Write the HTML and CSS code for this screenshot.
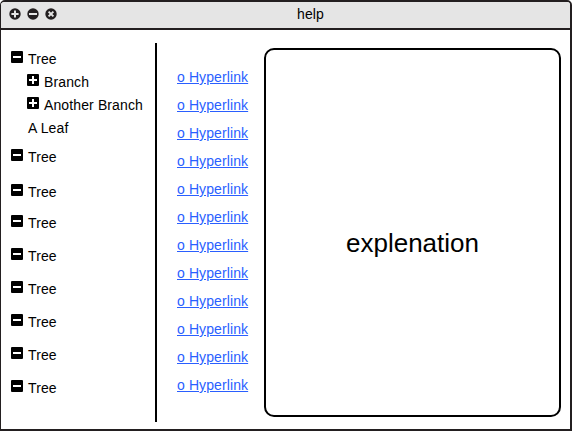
FILE: index.html
```
<!DOCTYPE html>
<html lang="en">
<head>
<meta charset="utf-8">
<title>help</title>
<link rel="stylesheet" href="styles.css">
</head>
<body>
<svg class="defs" width="0" height="0">
  <symbol id="minus" viewBox="0 0 12 12"><rect width="12" height="12" rx="1"/><path d="M2 6h8" stroke="#fff" stroke-width="2"/></symbol>
  <symbol id="plus" viewBox="0 0 12 12"><rect width="12" height="12" rx="1"/><path d="M2 6h8M6 2v8" stroke="#fff" stroke-width="2"/></symbol>
</svg>
<div class="window">
  <header class="titlebar">
    <div class="controls">
      <svg viewBox="0 0 12 12"><circle cx="6" cy="6" r="5.7"/><path d="M2.4 6h7.2M6 2.4v7.2"/></svg>
      <svg viewBox="0 0 12 12"><circle cx="6" cy="6" r="5.7"/><path d="M2 6h8"/></svg>
      <svg viewBox="0 0 12 12"><circle cx="6" cy="6" r="5.7"/><path d="M3.6 3.6l4.8 4.8M8.4 3.6l-4.8 4.8"/></svg>
    </div>
    <h1>help</h1>
  </header>
  <main class="content">
    <ul class="tree">
      <li><svg><use href="#minus"/></svg>Tree</li>
      <li class="branch"><svg><use href="#plus"/></svg>Branch</li>
      <li class="branch"><svg><use href="#plus"/></svg>Another Branch</li>
      <li class="leaf">A Leaf</li>
      <li class="after-leaf"><svg><use href="#minus"/></svg>Tree</li>
      <li class="wide"><svg><use href="#minus"/></svg>Tree</li>
      <li class="narrow"><svg><use href="#minus"/></svg>Tree</li>
      <li class="root"><svg><use href="#minus"/></svg>Tree</li>
      <li class="root"><svg><use href="#minus"/></svg>Tree</li>
      <li class="root"><svg><use href="#minus"/></svg>Tree</li>
      <li class="root"><svg><use href="#minus"/></svg>Tree</li>
      <li class="root"><svg><use href="#minus"/></svg>Tree</li>
    </ul>
    <nav class="links">
      <a href="#">o Hyperlink</a>
      <a href="#">o Hyperlink</a>
      <a href="#">o Hyperlink</a>
      <a href="#">o Hyperlink</a>
      <a href="#">o Hyperlink</a>
      <a href="#">o Hyperlink</a>
      <a href="#">o Hyperlink</a>
      <a href="#">o Hyperlink</a>
      <a href="#">o Hyperlink</a>
      <a href="#">o Hyperlink</a>
      <a href="#">o Hyperlink</a>
      <a href="#">o Hyperlink</a>
    </nav>
    <section class="panel">explenation</section>
  </main>
</div>
</body>
</html>
```
FILE: styles.css
```
* { box-sizing: border-box; }
body {
  margin: 0;
  background: #fff;
  color: #000;
  font: 14px "Liberation Sans", Arial, sans-serif;
}
.defs { display: none; }
.window {
  width: 572px;
  height: 431px;
  display: flex;
  flex-direction: column;
  border: 2px solid #231f20;
  border-left-width: 1px;
  border-radius: 5px 5px 0 0;
  overflow: hidden;
}
.titlebar {
  height: 28px;
  flex: none;
  display: flex;
  background: #e5e5e5;
  border-bottom: 2px solid #231f20;
}
.controls {
  width: 296px;
  display: flex;
  gap: 6px;
  padding: 6px 0 0 8px;
}
.controls svg { width: 12px; height: 12px; fill: #231f20; }
.controls path { stroke: #e5e5e5; stroke-width: 2; }
h1 {
  margin: 0;
  font-size: 14px;
  font-weight: normal;
  line-height: 24px;
  letter-spacing: 0.1px;
}
.content { flex: 1; display: flex; }
.tree {
  flex: none;
  width: 156px;
  height: 379px;
  margin: 13px 0 0;
  padding: 5px 0 0 10px;
  border-right: 2px solid #000;
  list-style: none;
  letter-spacing: 0.12px;
}
.tree li {
  display: flex;
  gap: 5px;
  height: 23px;
  line-height: 23px;
  white-space: nowrap;
}
.tree svg { width: 12px; height: 12px; margin-top: 3px; }
.tree .branch { padding-left: 16px; }
.tree .leaf { padding-left: 17px; }
.tree .after-leaf { margin-top: 6px; }
.tree .wide { margin-top: 12px; }
.tree .narrow { margin-top: 8px; }
.tree .root { margin-top: 10px; }
.links {
  flex: none;
  width: 107px;
  padding: 33px 0 0 20px;
  display: flex;
  flex-direction: column;
  align-items: flex-start;
}
.links a {
  color: #2a5fff;
  line-height: 28px;
  letter-spacing: 0.1px;
  white-space: nowrap;
}
.panel {
  flex: none;
  width: 297px;
  height: 369px;
  margin-top: 18px;
  display: grid;
  place-items: center;
  padding-top: 22px;
  border: 2px solid #000;
  border-radius: 10px;
  font-size: 26px;
}
```
